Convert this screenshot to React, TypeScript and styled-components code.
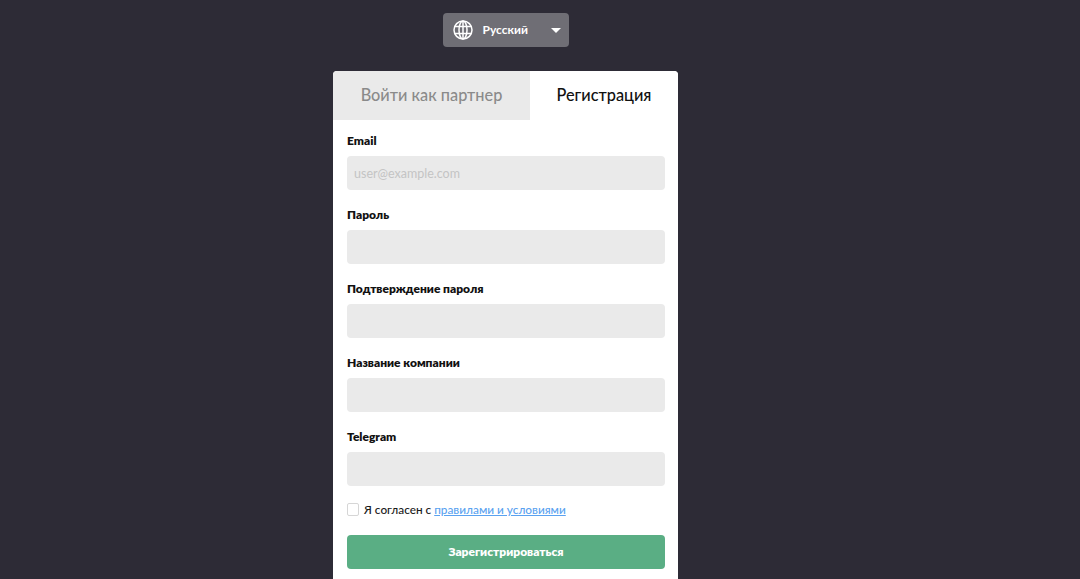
import React from 'react'
import styled, { createGlobalStyle } from 'styled-components'

const GlobalStyle = createGlobalStyle`
  html, body {
    margin: 0;
    height: 100%;
    overflow: hidden;
    background: #2d2b36;
  }
  * {
    box-sizing: border-box;
  }
`

const Page = styled.div`
  display: flex;
  flex-direction: column;
  align-items: center;
  padding: 13px 69px 0 0;
  font-family: Lato, 'Noto Sans', sans-serif;
`

const LangSelect = styled.button`
  display: flex;
  align-items: center;
  width: 126px;
  height: 34px;
  padding: 0 6px 0 10px;
  margin: 0 0 24px;
  border: 0;
  border-radius: 4px;
  background: #6f6e75;
  color: #fff;
  font-family: inherit;
  font-size: 12px;
  font-weight: 700;
`

const LangName = styled.span`
  flex: 1;
  padding: 0 0 2px 10px;
  text-align: left;
`

const Caret = styled.span`
  width: 0;
  height: 0;
  margin-right: 2px;
  border-left: 5px solid transparent;
  border-right: 5px solid transparent;
  border-top: 5px solid #fff;
`

const Card = styled.div`
  width: 345px;
  background: #fff;
  border-radius: 4px 4px 0 0;
  overflow: hidden;
`

const Tabs = styled.div`
  display: flex;
  height: 49px;
`

const Tab = styled.div<{ $active?: boolean }>`
  display: flex;
  align-items: center;
  justify-content: center;
  flex: ${({ $active }) => ($active ? '1' : '0 0 197px')};
  padding-bottom: 2px;
  background: ${({ $active }) => ($active ? '#fff' : '#eaeaea')};
  color: ${({ $active }) => ($active ? '#111' : '#8a8a8a')};
  font-size: 16.3px;
  font-weight: 500;
`

const Form = styled.form`
  display: flex;
  flex-direction: column;
  padding: 12px 13px 40px 14px;
`

const Field = styled.div`
  display: flex;
  flex-direction: column;
  margin-bottom: 16px;
`

const Label = styled.label`
  height: 24px;
  line-height: 17px;
  font-size: 12px;
  font-weight: 800;
  color: #111;
`

const Input = styled.input`
  height: 34px;
  padding: 0 7px;
  border: 0;
  border-radius: 4px;
  background: #eaeaea;
  font-family: inherit;
  font-size: 12.5px;

  &::placeholder {
    color: #c4c4c4;
    opacity: 1;
  }
`

const AgreeRow = styled.div`
  display: flex;
  align-items: center;
  gap: 5px;
  height: 13px;
  margin: 1px 0 19px;
  font-size: 11.8px;
  font-weight: 500;
  color: #1a1a1a;
`

const Checkbox = styled.span`
  width: 12px;
  height: 13px;
  border: 1px solid #d6d6d6;
  border-radius: 2px;
  background: #fff;
`

const TermsLink = styled.a`
  color: #5aa2f0;
  text-decoration: underline;
`

const Submit = styled.button`
  height: 34px;
  padding-bottom: 2px;
  border: 0;
  border-radius: 4px;
  background: #5aae84;
  color: #fff;
  font-family: inherit;
  font-size: 12px;
  font-weight: 800;
`

const fields = [
  { label: 'Email', placeholder: 'user@example.com' },
  { label: 'Пароль', type: 'password' },
  { label: 'Подтверждение пароля', type: 'password' },
  { label: 'Название компании' },
  { label: 'Telegram' },
]

function GlobeIcon() {
  return (
    <svg width="20" height="20" viewBox="0 0 20 20" fill="none" stroke="#fff" strokeWidth="1.5">
      <circle cx="10" cy="10" r="9" />
      <ellipse cx="10" cy="10" rx="4" ry="9" />
      <path d="M10 1v18M2 6.5h16M2 13.5h16" />
    </svg>
  )
}

export default function App() {
  return (
    <Page>
      <GlobalStyle />
      <LangSelect type="button">
        <GlobeIcon />
        <LangName>Русский</LangName>
        <Caret />
      </LangSelect>

      <Card>
        <Tabs>
          <Tab>Войти как партнер</Tab>
          <Tab $active>Регистрация</Tab>
        </Tabs>

        <Form>
          {fields.map((f) => (
            <Field key={f.label}>
              <Label>{f.label}</Label>
              <Input type={f.type ?? 'text'} placeholder={f.placeholder} />
            </Field>
          ))}

          <AgreeRow>
            <Checkbox />
            <span>
              Я согласен с <TermsLink href="#">правилами и условиями</TermsLink>
            </span>
          </AgreeRow>

          <Submit type="button">Зарегистрироваться</Submit>
        </Form>
      </Card>
    </Page>
  )
}
